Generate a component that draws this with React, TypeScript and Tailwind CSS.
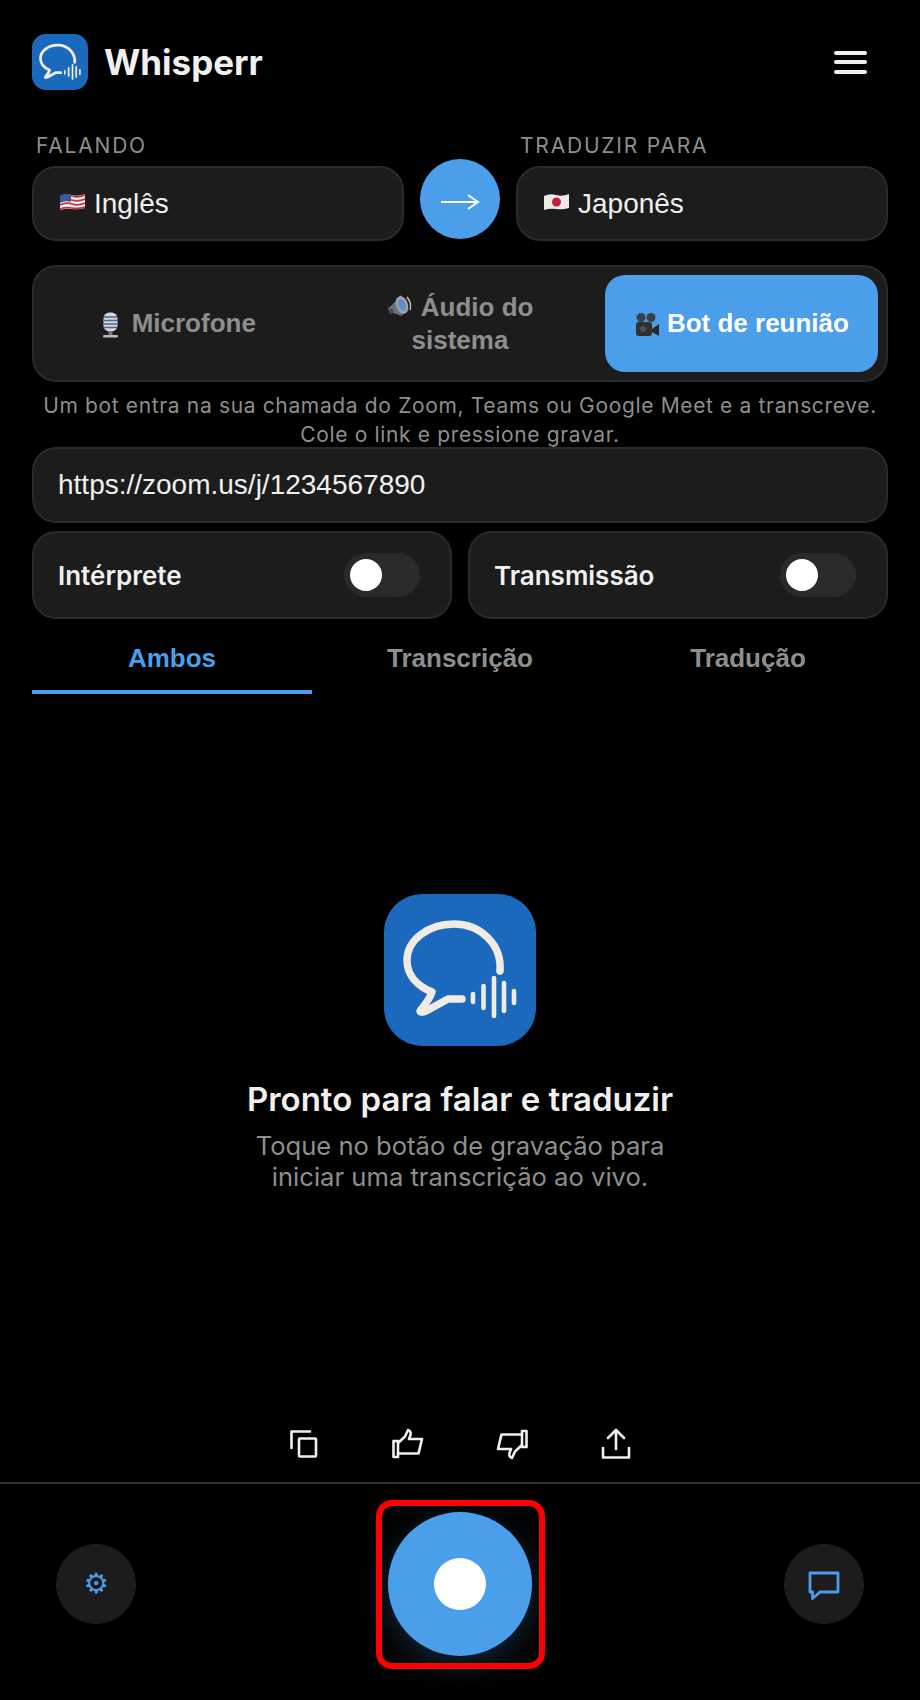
import React from 'react';

function Logo({ size }: { size: number }) {
  return (
    <svg width={size} height={size} viewBox="0 0 152 152" className="shrink-0" aria-hidden="true">
      <rect width="152" height="152" rx="38" fill="#1a69bd" />
      <path
        d="M116 77C118 50 96 30 70 30C43 30 23 47 23 66C23 81 33 92 48 98C46 105 40 112 36 117C37 119 41 118 44 116L64 105L78 105"
        fill="none"
        stroke="#f0ebe3"
        strokeWidth="7.5"
        strokeLinecap="round"
        strokeLinejoin="round"
      />
      <path
        d="M89 100V108M99.500 92V114M110 84V122M120 89V117M130 97V109"
        fill="none"
        stroke="#f0ebe3"
        strokeWidth="4.600"
        strokeLinecap="round"
      />
    </svg>
  );
}

function UsFlag() {
  return (
    <svg width="25" height="18" viewBox="0 0 25 18" className="shrink-0" aria-hidden="true">
      <path d="M0 3Q6 0 12 2T25 1V15Q18 17 12 16T0 17Z" fill="#f3f0ee" />
      <path
        d="M0 4Q6 1 12 3T25 2M0 8Q6 5 12 7T25 6M0 12Q6 9 12 11T25 10M0 16Q6 14 12 15T25 14"
        fill="none"
        stroke="#c8323f"
        strokeWidth="1.700"
      />
      <path d="M0 3Q6 0 11 1.500V9Q6 7 0 10Z" fill="#3d5a98" />
    </svg>
  );
}

function JpFlag() {
  return (
    <svg width="25" height="18" viewBox="0 0 25 18" className="shrink-0" aria-hidden="true">
      <path d="M0 3Q6 0 12 2T25 1V15Q18 17 12 16T0 17Z" fill="#ecebe8" />
      <circle cx="12.500" cy="9" r="4.500" fill="#c41f3e" />
    </svg>
  );
}

function MicEmoji() {
  return (
    <svg width="19" height="26" viewBox="0 0 19 26" className="mr-[4px] inline-block align-[-6px]" aria-hidden="true">
      <rect x="2.500" y="0.500" width="14" height="19" rx="6" fill="#d4d8dc" />
      <path d="M3 5H16M3 8.500H16M3 12H16M3 15.500H16" stroke="#4a6a8a" strokeWidth="1.300" />
      <rect x="7.500" y="19" width="4" height="4" fill="#777" />
      <rect x="2" y="23" width="15" height="2.500" rx="1" fill="#bbb" />
    </svg>
  );
}

function SpeakerEmoji() {
  return (
    <svg width="25" height="25" viewBox="0 0 25 25" className="mr-[2px] inline-block align-[-3px]" aria-hidden="true">
      <path d="M1 14L5 11L14 1L20 11L15 22L6 19L3 20Z" fill="#6d7074" />
      <ellipse cx="15" cy="11" rx="6" ry="9" transform="rotate(-20 15 11)" fill="#9ea3a8" />
      <ellipse cx="15" cy="11" rx="3.500" ry="6" transform="rotate(-20 15 11)" fill="#5b8dc2" />
      <path d="M20 3Q25 9 23 16" fill="none" stroke="#c4c8cc" strokeWidth="1.300" />
      <circle cx="4" cy="17" r="2.500" fill="#45484b" />
    </svg>
  );
}

function CameraEmoji() {
  return (
    <svg width="26" height="26" viewBox="0 0 26 26" className="inline-block align-[-6px]" aria-hidden="true">
      <circle cx="7" cy="5.500" r="4.500" fill="#3d4043" />
      <circle cx="17" cy="5.500" r="4.500" fill="#3d4043" />
      <rect x="2" y="10" width="16" height="14" rx="3" fill="#2e3032" />
      <path d="M18 17L25 12V24L18 20Z" fill="#26282a" />
      <circle cx="9" cy="17" r="3" fill="#4d5054" />
    </svg>
  );
}

function LangSelect({ label, flag, name }: { label: string; flag: React.ReactNode; name: string }) {
  return (
    <div className="w-[372px] shrink-0">
      <div className="h-[34px] pl-[4px] font-['Inter',sans-serif] text-[21px] leading-[27px] tracking-[1.800px] text-[#8e8e8e]">
        {label}
      </div>
      <div className="flex h-[75px] items-center gap-[9px] rounded-[24px] border-2 border-[#2a2a2a] bg-[#1c1c1c] pl-[26px] font-['Liberation_Sans',sans-serif] text-[28px] text-[#f0f0f0]">
        <span className="-mt-[4px]">{flag}</span>
        <span>{name}</span>
      </div>
    </div>
  );
}

function ToggleCard({ label }: { label: string }) {
  return (
    <div className="flex h-[88px] flex-1 items-center justify-between rounded-[24px] border-2 border-[#2a2a2a] bg-[#1c1c1c] pl-[24px] pr-[30px]">
      <span className="font-['Inter',sans-serif] text-[26px] font-semibold text-[#f0f0f0]">{label}</span>
      <span className="flex h-[44px] w-[76px] items-center rounded-full bg-[#2a2a2a] pl-[6px]">
        <span className="h-[32px] w-[32px] rounded-full bg-white" />
      </span>
    </div>
  );
}

function ActionIcon({ children }: { children: React.ReactNode }) {
  return (
    <svg
      width="36"
      height="36"
      viewBox="0 0 36 36"
      fill="none"
      stroke="#f0f0f0"
      strokeWidth="2.600"
      strokeLinecap="round"
      strokeLinejoin="round"
      aria-hidden="true"
    >
      {children}
    </svg>
  );
}

export default function App() {
  return (
    <div className="relative flex h-[1700px] w-[920px] flex-col overflow-hidden bg-black">
      <div className="flex-1 px-[32px]">
        {/* header */}
        <div className="mt-[34px] flex h-[56px] items-center justify-between">
          <div className="flex items-center gap-[16px]">
            <Logo size={56} />
            <span className="font-['Inter',sans-serif] text-[35px] font-bold text-[#f0f0f0]">Whisperr</span>
          </div>
          <div className="mr-[21px] flex w-[33px] flex-col gap-[5.500px]">
            <span className="h-[4px] rounded-full bg-[#f0f0f0]" />
            <span className="h-[4px] rounded-full bg-[#f0f0f0]" />
            <span className="h-[4px] rounded-full bg-[#f0f0f0]" />
          </div>
        </div>

        {/* languages */}
        <div className="mt-[42px] flex items-end gap-[16px]">
          <LangSelect label="FALANDO" flag={<UsFlag />} name="Inglês" />
          <div className="mb-[2px] flex h-[80px] w-[80px] shrink-0 items-center justify-center rounded-full bg-[#4a9eea]">
            <svg width="40" height="18" viewBox="0 0 40 18" fill="none" stroke="#ffffff" strokeWidth="2" className="mt-[5px]" aria-hidden="true">
              <path d="M1 9H38M28 2L38 9L28 16" />
            </svg>
          </div>
          <LangSelect label="TRADUZIR PARA" flag={<JpFlag />} name="Japonês" />
        </div>

        {/* source */}
        <div className="mt-[24px] grid h-[117px] grid-cols-3 gap-[8px] rounded-[24px] border-2 border-[#2a2a2a] bg-[#1c1c1c] p-[8px] font-['Liberation_Sans',sans-serif] text-[26px] font-bold leading-[33px]">
          <div className="flex items-center justify-center px-[24px] text-center text-[#8e8e8e]">
            <span>
              <MicEmoji /> Microfone
            </span>
          </div>
          <div className="flex items-center justify-center px-[24px] text-center text-[#8e8e8e]">
            <span>
              <SpeakerEmoji /> Áudio do sistema
            </span>
          </div>
          <div className="flex items-center justify-center rounded-[20px] bg-[#4a9eea] text-center text-white">
            <span>
              <CameraEmoji /> Bot de reunião
            </span>
          </div>
        </div>

        <p className="mt-[9px] text-center font-['Inter',sans-serif] text-[21px] leading-[29px] tracking-[0.650px] text-[#8e8e8e]">
          Um bot entra na sua chamada do Zoom, Teams ou Google Meet e a transcreve.
          <br />
          Cole o link e pressione gravar.
        </p>

        {/* meeting link */}
        <div className="-mt-[2px] flex h-[76px] items-center rounded-[24px] border-2 border-[#2a2a2a] bg-[#1c1c1c] pl-[24px] font-['Liberation_Sans',sans-serif] text-[28px] text-[#f0f0f0]">
          https://zoom.us/j/1234567890
        </div>

        <div className="mt-[8px] flex gap-[16px]">
          <ToggleCard label="Intérprete" />
          <ToggleCard label="Transmissão" />
        </div>

        {/* tabs */}
        <div className="mt-[7px] grid grid-cols-3 gap-[8px] font-['Liberation_Sans',sans-serif] text-[26px] font-bold">
          <div className="flex h-[68px] items-center justify-center border-b-4 border-[#4a9eea] text-[#4a9eea]">Ambos</div>
          <div className="flex h-[68px] items-center justify-center border-b-4 border-transparent text-[#8e8e8e]">Transcrição</div>
          <div className="flex h-[68px] items-center justify-center border-b-4 border-transparent text-[#8e8e8e]">Tradução</div>
        </div>

        {/* empty state */}
        <div className="mt-[200px] flex flex-col items-center">
          <Logo size={152} />
          <h2 className="mt-[31px] font-['Inter',sans-serif] text-[33px] font-semibold leading-[44px] text-[#f0f0f0]">
            Pronto para falar e traduzir
          </h2>
          <p className="mt-[10px] text-center font-['Inter',sans-serif] text-[25.600px] leading-[30.500px] text-[#8e8e8e]">
            Toque no botão de gravação para
            <br />
            iniciar uma transcrição ao vivo.
          </p>
        </div>
      </div>

      {/* message actions */}
      <div className="flex h-[60px] items-center justify-center gap-[68px] pb-[16px]">
        <ActionIcon>
          <path d="M5.500 22V5.500H24" />
          <rect x="13" y="12.500" width="17" height="18" rx="1" />
        </ActionIcon>
        <ActionIcon>
          <path d="M8 15H3.500V31H8Z" />
          <path d="M8 17L15 10.500L18 4C20.500 4.500 21 7 20.500 9L19 13H32L28.500 27.500H8" />
        </ActionIcon>
        <ActionIcon>
          <path d="M28 21H32.500V5H28Z" />
          <path d="M28 19L21 25.500L18 32C15.500 31.500 15 29 15.500 27L17 23H4L7.500 8.500H28" />
        </ActionIcon>
        <ActionIcon>
          <path d="M18 23V4.500" />
          <path d="M10 12L18 4L26 12" />
          <path d="M5 22V31.500H31V22" />
        </ActionIcon>
      </div>

      {/* bottom bar */}
      <div className="flex h-[218px] items-start justify-between border-t-2 border-[#333333] px-[56px] pt-[28px]">
        <div className="mt-[32px] flex h-[80px] w-[80px] items-center justify-center rounded-full bg-[#1c1c1c] font-['DejaVu_Sans',sans-serif] text-[28px] leading-none text-[#4a9eea]">
          ⚙
        </div>
        <div className="flex h-[144px] w-[144px] items-center justify-center rounded-full bg-[#4a9eea] shadow-[0_8px_32px_rgba(74,158,234,0.25)]">
          <span className="h-[52px] w-[52px] rounded-full bg-white" />
        </div>
        <div className="mt-[32px] flex h-[80px] w-[80px] items-center justify-center rounded-full bg-[#1c1c1c]">
          <svg width="32" height="32" viewBox="0 0 32 32" fill="none" stroke="#4a9eea" strokeWidth="2.800" strokeLinejoin="round" aria-hidden="true">
            <path d="M2 5H30V24H12L4.500 30.500V24H2Z" />
          </svg>
        </div>
      </div>

      {/* red annotation round the record button */}
      <div className="absolute left-[376px] top-[1500px] h-[169px] w-[169px] rounded-[16px] border-[6px] border-[#ff0000]" />
    </div>
  );
}
